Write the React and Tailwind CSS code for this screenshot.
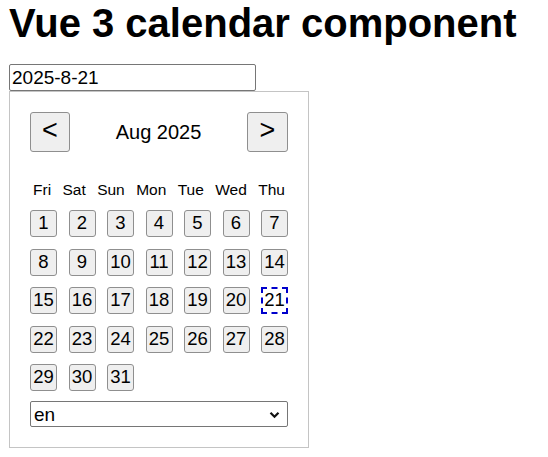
export default function App() {
  const days = Array.from({ length: 31 }, (_, i) => i + 1);
  const names = ["Fri", "Sat", "Sun", "Mon", "Tue", "Wed", "Thu"];
  return (
    <div className="min-h-[457px] bg-white pl-[9px] font-['Liberation_Sans',Arial,sans-serif] text-black">
      <h1 className="m-0 text-[40px] font-bold leading-[46px]">Vue 3 calendar component</h1>
      <input
        readOnly
        defaultValue="2025-8-21"
        className="mt-[18px] block h-[27px] w-[247px] rounded-[2px] border border-[#767676] px-[2px] text-[19px] leading-[25px] outline-none"
      />
      <div className="w-[300px] border border-[#c4c4c4] p-[20px]">
        <div className="flex items-center justify-between">
          <button className="flex h-[40px] w-[40px] items-center justify-center rounded-[3px] border border-[#8f8f8f] bg-[#efefef] pb-[3px] text-[27px] leading-none">
            &lt;
          </button>
          <span className="text-[20px] leading-[22px]">Aug 2025</span>
          <button className="flex h-[40px] w-[41px] items-center justify-center rounded-[3px] border border-[#8f8f8f] bg-[#efefef] pb-[3px] text-[27px] leading-none">
            &gt;
          </button>
        </div>
        <div className="mt-[29px] flex h-[17px] justify-between px-[3px] text-[15.5px] leading-[17px]">
          {names.map((n) => (
            <span key={n}>{n}</span>
          ))}
        </div>
        <div className="mt-[12px] grid grid-cols-[repeat(7,27px)] justify-between gap-y-[11.5px]">
          {days.map((d) =>
            d === 21 ? (
              <div
                key={d}
                className="flex h-[27px] w-[27px] items-center justify-center border-2 border-dashed border-[#0000cc] text-[18.5px] leading-none"
              >
                {d}
              </div>
            ) : (
              <button
                key={d}
                className="flex h-[27px] w-[27px] items-center justify-center rounded-[3px] border border-[#8f8f8f] bg-[#efefef] p-0 text-[18.5px] leading-none"
              >
                {d}
              </button>
            )
          )}
        </div>
        <div className="mt-[10px] flex h-[26px] items-center justify-between rounded-[2px] border border-[#767676] pl-[3px] pr-[7px] text-[19px] leading-none">
          <span>en</span>
          <svg width="11" height="8" viewBox="0 0 11 8" className="mt-[1px]">
            <path d="M1.5 1.8 L5.5 5.8 L9.5 1.8" fill="none" stroke="#111" strokeWidth="2.2" />
          </svg>
        </div>
      </div>
    </div>
  );
}
